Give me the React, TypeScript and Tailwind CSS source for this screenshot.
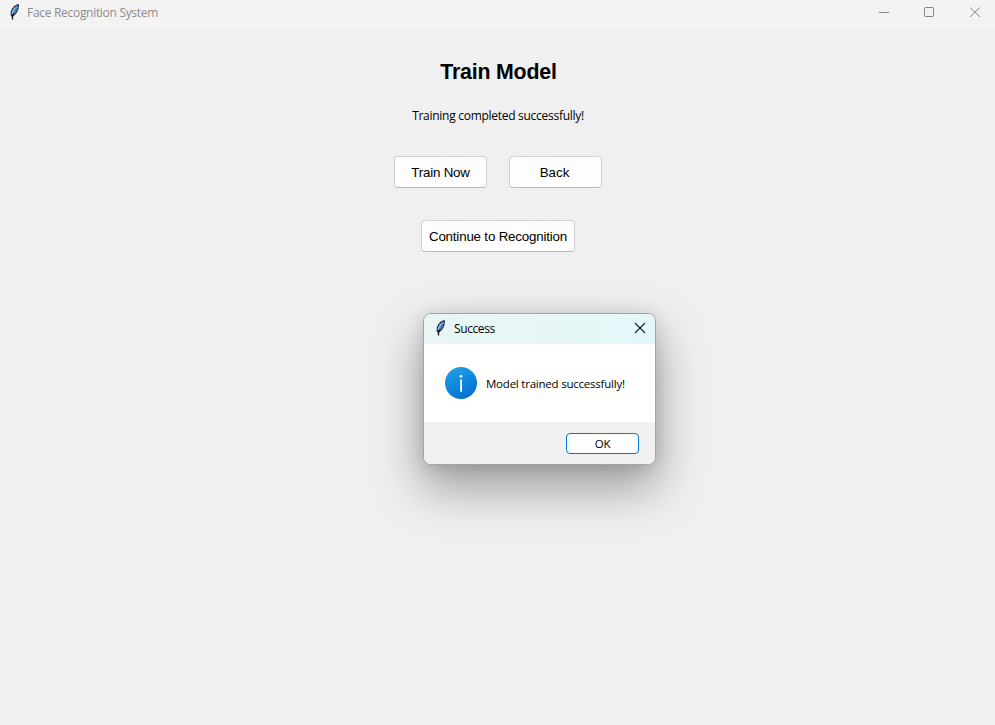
import React from "react";

function Feather() {
  return (
    <svg width="16" height="16" viewBox="0 0 16 16" className="shrink-0">
      <path d="M12.2 .7C9.3 1.2 6.6 4 5.5 7.2C4.9 9 5 10.6 5.8 12L7.3 11.6C10.4 9.4 12.8 5 12.2 .7Z" fill="#5b9bea" stroke="#16181c" strokeWidth="1.1" strokeDasharray="2.6 .3" />
      <path d="M8.8 3.8L6.5 8.2L6.4 10" stroke="#a9cdf3" strokeWidth="1" fill="none" />
      <path d="M10.6 4.2L7.8 9.6" stroke="#264f88" strokeWidth=".7" fill="none" />
      <path d="M7.5 9.6L6.5 12.2V15.5" stroke="#0b0c10" strokeWidth="1.3" fill="none" />
    </svg>
  );
}

function Button({ label, className }: { label: string; className: string }) {
  return (
    <button
      className={`flex h-8 items-center justify-center whitespace-nowrap rounded-[4px] border border-[#d0d0d0] border-b-[#bababa] bg-[#fdfdfd] pt-px font-['Liberation_Sans',Arial,sans-serif] text-[13.33px] leading-4 text-black ${className}`}
    >
      {label}
    </button>
  );
}

function SuccessDialog() {
  return (
    <div
      role="dialog"
      className="absolute left-[423px] top-[313px] flex h-[152px] w-[233px] flex-col overflow-hidden rounded-[8px] border border-[#a3a5a5] bg-white shadow-[0_22px_48px_2px_rgba(0,0,0,0.34),0_2px_18px_rgba(0,0,0,0.12)]"
    >
      <div className="flex h-[30px] shrink-0 items-center bg-gradient-to-r from-[#e9f5f6] to-[#e4f7f8] pl-2">
        <div className="-mt-[3px]"><Feather /></div>
        <span className="ml-[6px] text-[12px] leading-4 tracking-[-0.4px] text-black">Success</span>
        <svg width="12" height="12" viewBox="0 0 12 12" className="-mt-[2px] ml-auto mr-[9px]">
          <path d="M1 1L11 11M11 1L1 11" stroke="#1a1a1a" strokeWidth="1.1" />
        </svg>
      </div>
      <div className="flex h-[78px] shrink-0 items-center pl-[21px]">
        <svg width="32" height="32" viewBox="0 0 32 32" className="shrink-0">
          <defs>
            <linearGradient id="info" x1="0.2" y1="0" x2="0.7" y2="1">
              <stop offset="0" stopColor="#20a0e4" />
              <stop offset="1" stopColor="#0070d4" />
            </linearGradient>
          </defs>
          <circle cx="16" cy="16" r="16" fill="url(#info)" />
          <circle cx="16" cy="9.3" r="1.35" fill="white" />
          <path d="M16.1 12.6V24.8" stroke="white" strokeWidth="1.8" />
        </svg>
        <span className="ml-[9px] mt-[2px] whitespace-nowrap text-[11.5px] leading-4 tracking-[-0.22px] text-black">Model trained successfully!</span>
      </div>
      <div className="flex grow items-center justify-end bg-[#f0f0f0] pr-4">
        <button className="flex h-[21px] w-[73px] items-center justify-center rounded-[4px] border border-[#0078d4] bg-[#fdfdfd] pt-[2px] text-[11.5px] leading-4 tracking-[-0.3px] text-black">
          OK
        </button>
      </div>
    </div>
  );
}

export default function App() {
  return (
    <div className="relative flex h-[725px] w-[995px] flex-col overflow-hidden bg-[#f0f0f0] font-['Open_Sans','Noto_Sans',sans-serif]">
      <header className="flex h-7 shrink-0 items-start bg-[#f3f3f3] pl-[6px]">
        <div className="mt-[4px]"><Feather /></div>
        <span className="ml-[5px] mt-[5px] whitespace-nowrap text-[12px] leading-4 tracking-[-0.3px] text-[#8c8c8c]">Face Recognition System</span>
        <svg width="104" height="12" viewBox="0 0 104 12" className="ml-auto mr-[13px] mt-[6px]" fill="none" stroke="#858585">
          <path d="M1 6.5H11" />
          <rect x="46.5" y="1.5" width="9" height="9" rx=".8" />
          <path d="M92 1.5L102 11M102 1.5L92 11" />
        </svg>
      </header>
      <main className="flex flex-col items-center pl-px">
        <h1 className="mt-8 whitespace-nowrap pl-px font-['Liberation_Sans',Arial,sans-serif] text-[21.33px] font-bold leading-6 tracking-[-0.2px] text-black">Train Model</h1>
        <p className="mt-6 whitespace-nowrap text-[12px] leading-4 tracking-[-0.28px] text-black">Training completed successfully!</p>
        <div className="mt-8 flex gap-[22px]">
          <Button label="Train Now" className="w-[93px] tracking-[-0.2px]" />
          <Button label="Back" className="w-[93px] pr-[2px]" />
        </div>
        <Button label="Continue to Recognition" className="mt-8 w-[154px] tracking-[-0.18px]" />
      </main>
      <SuccessDialog />
    </div>
  );
}
